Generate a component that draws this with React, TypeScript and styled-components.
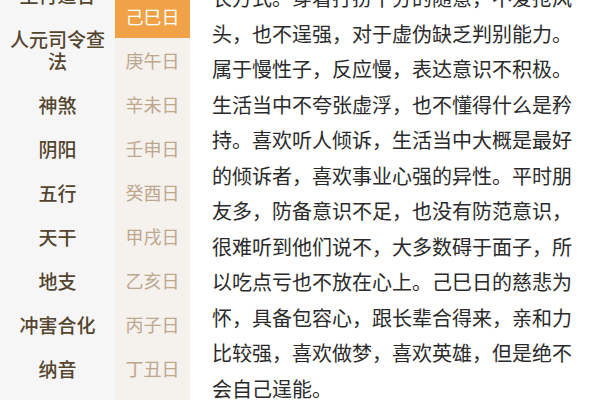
import React from 'react';
import styled, { createGlobalStyle } from 'styled-components';

const GlobalStyle = createGlobalStyle`
  html, body {
    margin: 0;
    padding: 0;
    width: 600px;
    height: 400px;
    overflow: hidden;
    background: #ffffff;
  }
  * {
    box-sizing: border-box;
  }
`;

const labels = [
  '生肖适合',
  '人元司令查法',
  '神煞',
  '阴阳',
  '五行',
  '天干',
  '地支',
  '冲害合化',
  '纳音',
];

const days = [
  '己巳日',
  '庚午日',
  '辛未日',
  '壬申日',
  '癸酉日',
  '甲戌日',
  '乙亥日',
  '丙子日',
  '丁丑日',
];

const article =
  '长方式。穿着打扮十分的随意，不爱抢风头，也不逞强，对于虚伪缺乏判别能力。属于慢性子，反应慢，表达意识不积极。生活当中不夸张虚浮，也不懂得什么是矜持。喜欢听人倾诉，生活当中大概是最好的倾诉者，喜欢事业心强的异性。平时朋友多，防备意识不足，也没有防范意识，很难听到他们说不，大多数碍于面子，所以吃点亏也不放在心上。己巳日的慈悲为怀，具备包容心，跟长辈合得来，亲和力比较强，喜欢做梦，喜欢英雄，但是绝不会自己逞能。';

const Page = styled.div`
  display: flex;
  width: 600px;
  height: 400px;
  overflow: hidden;
  font-family: 'Noto Sans CJK SC', 'Noto Sans', sans-serif;
`;

const Sidebar = styled.nav`
  width: 115px;
  flex-shrink: 0;
  background: #f6f6f6;
  overflow: hidden;
`;

const SideList = styled.div`
  margin-top: -27px;
  display: flex;
  flex-direction: column;
`;

const SideItem = styled.div`
  padding: 11px 8px;
  line-height: 22px;
  font-size: 19px;
  font-weight: 500;
  color: #54452f;
  text-align: center;
`;

const DayColumn = styled.div`
  width: 75px;
  flex-shrink: 0;
  background: #f5f1ed;
  overflow: hidden;
`;

const DayList = styled.div`
  margin-top: -6px;
  display: flex;
  flex-direction: column;
`;

const DayItem = styled.div<{ $active?: boolean }>`
  height: 44px;
  display: flex;
  align-items: center;
  justify-content: center;
  font-size: 18px;
  color: ${(p) => (p.$active ? '#ffffff' : '#bda78f')};
  background: ${(p) => (p.$active ? '#f1a247' : 'transparent')};
`;

const Content = styled.main`
  flex: 1;
  padding: 0 16px 0 22px;
  overflow: hidden;
`;

const Paragraph = styled.p`
  margin: -20px 0 0;
  width: 372px;
  font-size: 20px;
  line-height: 35.5px;
  color: #2a2a2a;
  text-align: left;
`;

export default function App() {
  return (
    <>
      <GlobalStyle />
      <Page>
        <Sidebar>
          <SideList>
            {labels.map((l) => (
              <SideItem key={l}>{l}</SideItem>
            ))}
          </SideList>
        </Sidebar>
        <DayColumn>
          <DayList>
            {days.map((d, i) => (
              <DayItem key={d} $active={i === 0}>
                {d}
              </DayItem>
            ))}
          </DayList>
        </DayColumn>
        <Content>
          <Paragraph>{article}</Paragraph>
        </Content>
      </Page>
    </>
  );
}
